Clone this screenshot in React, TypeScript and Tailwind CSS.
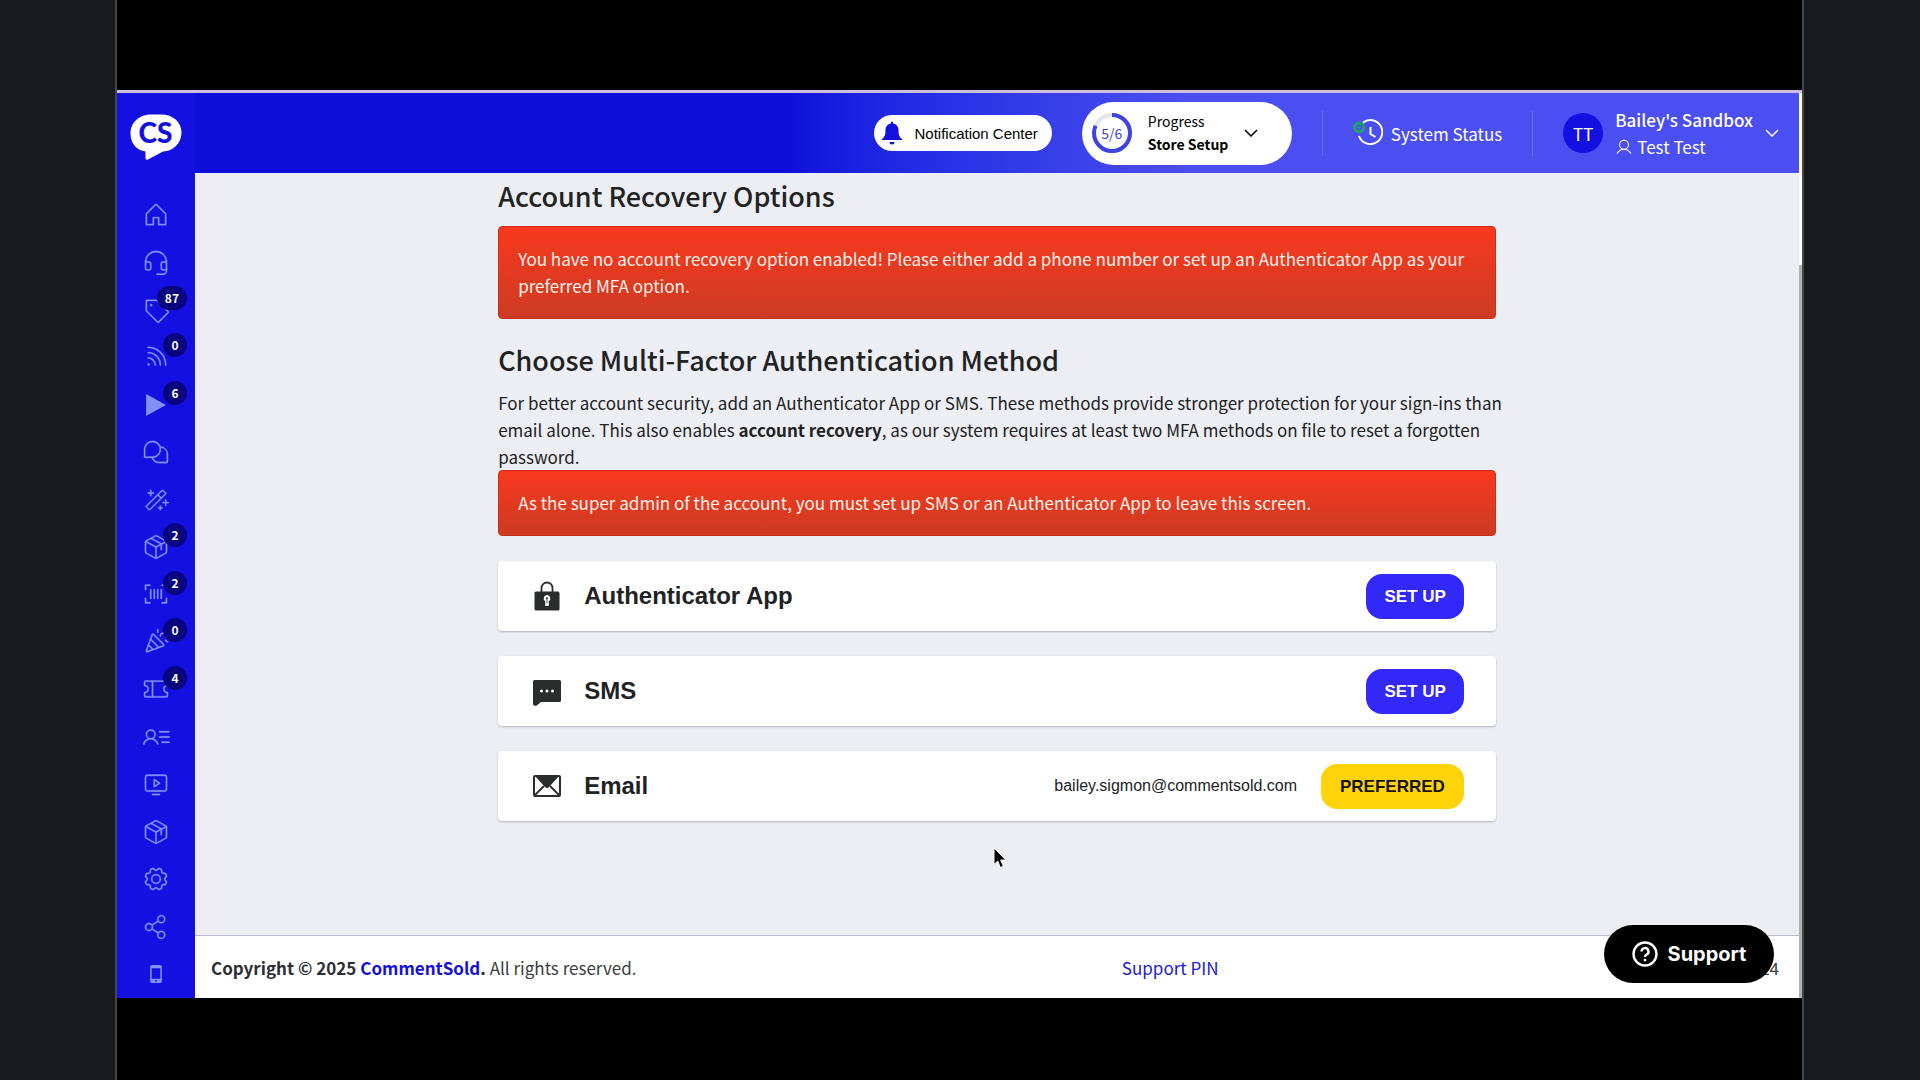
import type { ReactNode } from "react"
import type { IconType } from "react-icons"
import {
    PiBarcodeLight,
    PiChatsTeardropLight,
    PiConfettiLight,
    PiGearLight,
    PiHeadsetLight,
    PiHouseLight,
    PiMagicWandLight,
    PiMonitorPlayLight,
    PiPackageLight,
    PiRssLight,
    PiShareNetworkLight,
    PiTagLight,
    PiTicketLight,
    PiUserLight,
    PiUserListLight,
} from "react-icons/pi"

function PlayIcon({ className }: { className?: string }) {
    return (
        <svg viewBox="0 0 256 256" className={className} fill="currentColor">
            <path d="M37 28v200L219 128z" />
        </svg>
    )
}

function PhoneIcon({ className }: { className?: string }) {
    return (
        <svg viewBox="0 0 256 256" className={className} fill="currentColor" fillRule="evenodd">
            <path d="M92 46h72a18 18 0 0 1 18 18v128a18 18 0 0 1-18 18H92a18 18 0 0 1-18-18V64a18 18 0 0 1 18-18zM88 76v96h80V76zM118 184v12h20v-12z" />
        </svg>
    )
}

const navItems: { label: string, icon: IconType | typeof PlayIcon, badge?: string }[] = [
    { label: "Home", icon: PiHouseLight },
    { label: "Help", icon: PiHeadsetLight },
    { label: "Products", icon: PiTagLight, badge: "87" },
    { label: "Feed", icon: PiRssLight, badge: "0" },
    { label: "Live", icon: PlayIcon, badge: "6" },
    { label: "Messages", icon: PiChatsTeardropLight },
    { label: "Tools", icon: PiMagicWandLight },
    { label: "Orders", icon: PiPackageLight, badge: "2" },
    { label: "Scan", icon: PiBarcodeLight, badge: "2" },
    { label: "Promotions", icon: PiConfettiLight, badge: "0" },
    { label: "Coupons", icon: PiTicketLight, badge: "4" },
    { label: "Customers", icon: PiUserListLight },
    { label: "Videos", icon: PiMonitorPlayLight },
    { label: "Inventory", icon: PiPackageLight },
    { label: "Settings", icon: PiGearLight },
    { label: "Share", icon: PiShareNetworkLight },
    { label: "Mobile", icon: PhoneIcon },
]

function Logo() {
    return (
        <svg viewBox="0 0 52 46" className="h-[46px] w-[52px]">
            <path d="M22 0.5h9C43 0.5 51.5 8 51.5 18.500S43 37.500 33 37.500L18 45.500c-1.500.6-2.500 0-2.500-1.500v-6.500C6 36.500.5 28.500.5 19.500.5 8 9.500.5 22 .5z" fill="#fff" />
            <text x="25.500" y="29" textAnchor="middle" className="fill-[#1310df] font-['Lato'] text-[28px] font-black">CS</text>
        </svg>
    )
}

function Sidebar() {
    return (
        <aside className="flex w-[78px] shrink-0 flex-col bg-[#1510e2]">
            <a href="#" aria-label="CommentSold" className="flex h-[98px] justify-center pt-[21px]">
                <Logo />
            </a>
            <nav className="flex flex-1 flex-col">
                {navItems.map(({ label, icon: Icon, badge }) => (
                    <a key={label} href="#" aria-label={label} className="relative flex flex-1 items-center justify-center text-[#8490f8]">
                        <Icon className="size-7 stroke-3" />
                        {badge && (
                            <span className="absolute top-0 right-2 flex h-6 min-w-6 items-center justify-center rounded-full bg-[#08057f] px-2 text-xs font-bold text-white">{badge}</span>
                        )}
                    </a>
                ))}
            </nav>
        </aside>
    )
}

function Chevron({ className }: { className: string }) {
    return (
        <svg viewBox="0 0 14 8" className={className} fill="none" stroke="currentColor" strokeWidth="1.500">
            <path d="M1 1l6 6 6-6" />
        </svg>
    )
}

function Header() {
    return (
        <header className="flex h-20 shrink-0 items-center justify-end bg-linear-to-r from-[#0f0fdc] from-37% to-[#4b4ef1] to-62% pr-5 text-white">
            <button className="flex h-9 items-center gap-3 rounded-full bg-white pr-3.5 pl-2 font-['Liberation_Sans'] text-[15px] text-black">
                <svg viewBox="0 0 20 24" className="h-6 w-5" fill="#1310df">
                    <path d="M9 1.500a1 1 0 0 1 2 0v1c3.500.6 5.500 3.200 5.500 6.500 0 5 .8 7 3.500 9v1H0v-1c2.700-2 3.500-4 3.500-9 0-3.300 2-5.900 5.500-6.500zM7.500 21h5a2.500 2.500 0 0 1-5 0z" />
                </svg>
                Notification Center
            </button>
            <button className="ml-[30px] flex h-[63px] w-[210px] items-center rounded-full bg-white pl-2.5 text-left text-black">
                <span className="relative flex size-10 items-center justify-center text-sm text-[#3f43d8]">
                    <svg viewBox="0 0 40 40" className="absolute inset-0" fill="none" strokeWidth="4">
                        <circle cx="20" cy="20" r="18" stroke="#e4e4ee" />
                        <circle cx="20" cy="20" r="18" stroke="#3f43e0" pathLength="6" strokeDasharray="4.900 1.100" transform="rotate(-90 20 20)" />
                    </svg>
                    5/6
                </span>
                <span className="ml-4 text-sm leading-[23px]">
                    <span className="block">Progress</span>
                    <span className="block font-bold">Store Setup</span>
                </span>
                <Chevron className="ml-4 h-2 w-3.5" />
            </button>
            <div className="ml-[30px] h-[45px] w-px bg-[#6a6cf0]" />
            <a href="#" className="ml-[30px] flex items-center gap-2 text-[17px]">
                <svg viewBox="0 0 30 28" className="h-7 w-[30px]" fill="none">
                    <path d="M10 3.600A12 12 0 1 1 6 17" stroke="#fff" strokeWidth="2" />
                    <path d="M17.500 8v7l5 3" stroke="#fff" strokeWidth="2" />
                    <circle cx="6" cy="8.500" r="4.500" stroke="#22a06b" strokeWidth="3" />
                    <path d="M6 6.500v4M4 8.500h4" stroke="#22a06b" />
                </svg>
                System Status
            </a>
            <div className="ml-[30px] h-[45px] w-px bg-[#6a6cf0]" />
            <button className="ml-[30px] flex items-center text-left text-[17px]">
                <span className="flex size-10 items-center justify-center rounded-full bg-[#1510e2]">TT</span>
                <span className="ml-3">
                    <span className="block font-medium">Bailey's Sandbox</span>
                    <span className="flex items-center gap-1">
                        <PiUserLight className="size-[18px] stroke-3" />
                        Test Test
                    </span>
                </span>
                <Chevron className="ml-3 h-2 w-3.5" />
            </button>
        </header>
    )
}

function Alert({ children }: { children: ReactNode }) {
    return (
        <div role="alert" className="rounded-sm border border-[#c8301c] bg-linear-to-b from-[#f8381d] to-[#cc3b22] px-[19px] pt-[18px] pb-[19px] text-[#fff0ea]">
            {children}
        </div>
    )
}

function MethodCard({ name, icon, children }: { name: string, icon: ReactNode, children: ReactNode }) {
    return (
        <div className="flex h-[70px] items-center rounded-sm bg-white pr-8 pl-[35px] font-['Liberation_Sans'] shadow-[0_1px_2px_rgba(0,0,40,0.25)]">
            {icon}
            <h3 className="ml-[23px] flex-1 text-2xl font-bold">{name}</h3>
            {children}
        </div>
    )
}

function SetUpButton() {
    return (
        <button className="h-[45px] rounded-2xl bg-[#3228fa] px-[18px] font-bold text-white">SET UP</button>
    )
}

function MainContent() {
    return (
        <main className="flex-1 px-[18.900%] text-[#202224]">
            <h2 className="pt-[5px] text-[27px] leading-9 font-medium">Account Recovery Options</h2>
            <div className="mt-3">
                <Alert>You have no account recovery option enabled! Please either add a phone number or set up an Authenticator App as your preferred MFA option.</Alert>
            </div>
            <h2 className="mt-[23px] text-[27px] leading-9 font-medium">Choose Multi-Factor Authentication Method</h2>
            <p className="-mr-4 mt-[11px]">
                For better account security, add an Authenticator App or SMS. These methods provide stronger protection for your sign-ins than email alone. This also enables <strong>account recovery</strong>, as our system requires at least two MFA methods on file to reset a forgotten password.
            </p>
            <Alert>As the super admin of the account, you must set up SMS or an Authenticator App to leave this screen.</Alert>
            <div className="mt-[25px] flex flex-col gap-[25px]">
                <MethodCard
                    name="Authenticator App"
                    icon={
                        <svg viewBox="0 0 28 30" className="h-[30px] w-7" fill="#2b2d2d">
                            <path d="M8.500 11V7a5.500 5.500 0 0 1 11 0v4" fill="none" stroke="#2b2d2d" strokeWidth="1.800" />
                            <rect x="1.500" y="10.500" width="25" height="19" rx="1.500" />
                            <path d="M14 14a3.400 3.400 0 0 1 1.800 6.200V25h-3.600v-4.800A3.400 3.400 0 0 1 14 14z" fill="#fff" />
                            <circle cx="14" cy="17.300" r="1" />
                            <path d="M13.600 18h.8v4h-.8z" />
                        </svg>
                    }
                >
                    <SetUpButton />
                </MethodCard>
                <MethodCard
                    name="SMS"
                    icon={
                        <svg viewBox="0 0 28 26" className="mt-1 h-[26px] w-7" fill="#2b2d2d">
                            <path d="M1.500 0h25A1.500 1.500 0 0 1 28 1.500v19a1.500 1.500 0 0 1-1.500 1.500H8l-4 3.300C2 26.500 0 25.500 0 23.500v-22A1.500 1.500 0 0 1 1.500 0z" />
                            <g fill="#fff">
                                <circle cx="8.500" cy="11" r="1.500" />
                                <circle cx="14" cy="11" r="1.500" />
                                <circle cx="19.500" cy="11" r="1.500" />
                            </g>
                        </svg>
                    }
                >
                    <SetUpButton />
                </MethodCard>
                <MethodCard
                    name="Email"
                    icon={
                        <svg viewBox="0 0 28 22" className="h-[22px] w-7">
                            <rect x="1" y="1" width="26" height="20" rx="1" fill="#fff" stroke="#2b2d2d" strokeWidth="2" />
                            <path d="M2 1h24L16 12c-1.300 1.500-2.700 1.500-4 0z" fill="#2b2d2d" />
                            <path d="M1.500 20.500L11 11M26.500 20.500L17 11" stroke="#2b2d2d" strokeWidth="1.800" />
                        </svg>
                    }
                >
                    <span className="text-base">bailey.sigmon@commentsold.com</span>
                    <button className="ml-6 h-[45px] rounded-2xl bg-[#fed30a] px-[19px] font-bold text-[#141414]">PREFERRED</button>
                </MethodCard>
            </div>
        </main>
    )
}

function Footer() {
    return (
        <footer className="flex h-[63px] shrink-0 items-center justify-between border-t border-[#b9bfcf] bg-white pr-5 pl-4 text-[#3b3d40]">
            <p>
                <strong className="text-[#2c2e33]">Copyright © 2025 <a href="#" className="text-[#1310df]">CommentSold</a>.</strong> All rights reserved.
            </p>
            <a href="#" className="text-[#1a1ad2]">Support PIN</a>
            <span className="w-[75px] text-right">24</span>
        </footer>
    )
}

export default function App() {
    return (
        <div className="flex h-screen justify-center bg-[#171b1e] pr-[116px] pl-[115px] font-['Noto_Sans_CJK_SC',sans-serif] text-[17px] leading-[27px]">
            <div className="relative flex flex-1 flex-col border-x-2 border-[#444648] bg-black pt-[90px] pb-[82px]">
                <div className="h-[3px] shrink-0 bg-[#cdbfdc]" />
                <div className="flex min-h-0 flex-1">
                    <Sidebar />
                    <div className="flex min-w-0 flex-1 flex-col bg-[#edeef3]">
                        <Header />
                        <MainContent />
                        <Footer />
                    </div>
                    <div className="w-[3px] bg-white pt-[172px]">
                        <div className="h-full bg-[#b0b1b5]" />
                    </div>
                </div>
                <button className="absolute right-7 bottom-[97px] flex h-[58px] w-[170px] items-center justify-center gap-2.5 rounded-full bg-black font-['Inter'] text-xl font-bold text-white">
                    <svg viewBox="0 0 26 26" className="size-[26px]" fill="none" stroke="#fff" strokeWidth="2.400">
                        <circle cx="13" cy="13" r="11.500" />
                        <path d="M9.500 10.500a3.500 3.500 0 1 1 5 3.200c-1 .5-1.500 1-1.500 2.300M13 17.800v2.400" />
                    </svg>
                    Support
                </button>
                <svg viewBox="0 0 14 22" className="absolute top-[847px] left-[876px] h-[22px] w-3.5">
                    <path d="M1 1v16.500l3.800-3.500 2.600 6.500 3-1.200-2.700-6.300H13z" fill="#000" stroke="#fff" />
                </svg>
            </div>
        </div>
    )
}
